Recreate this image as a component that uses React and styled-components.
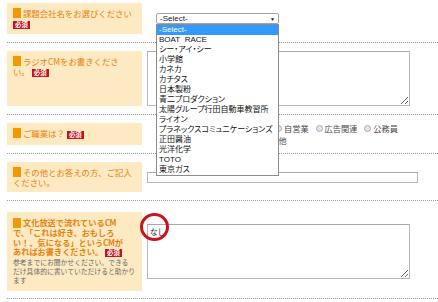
import React from "react";
import styled, { createGlobalStyle } from "styled-components";

const GlobalStyle = createGlobalStyle`
  body {
    margin: 0;
    background: #ffffff;
    font-family: "Liberation Sans", "Noto Sans CJK JP", sans-serif;
  }
`;

const Form = styled.div`
  width: 438px;
  padding-left: 7px;
  box-sizing: border-box;
  overflow: hidden;
`;

const Row = styled.div`
  display: flex;
  align-items: center;
  gap: 5px;
  padding-top: ${(p) => p.$pt || 8}px;
  padding-bottom: ${(p) => p.$pb || 8}px;
  border-bottom: 1px dotted #9a9a9a;
`;

const Label = styled.div`
  flex-shrink: 0;
  width: 135px;
  min-height: ${(p) => p.$h}px;
  box-sizing: border-box;
  padding: ${(p) => (p.$bold ? "6px 6px" : "5px 6px")};
  background: #fdeac2;
  color: #e8820f;
  font-family: "Noto Sans CJK JP", sans-serif;
  font-size: ${(p) => (p.$bold ? 8.2 : 8.4)}px;
  line-height: ${(p) => (p.$bold ? 9.5 : 10)}px;
  font-weight: ${(p) => (p.$bold ? 700 : 400)};
`;

const Mark = styled.span`
  display: inline-block;
  width: 8px;
  height: 10px;
  margin-right: 2px;
  vertical-align: top;
  background: #f39800;
`;

const Latin = styled.span`
  letter-spacing: -0.4px;
`;

const Badge = styled.span`
  display: inline-block;
  margin-left: ${(p) => (p.$inline ? 2 : 0)}px;
  margin-top: ${(p) => (p.$inline ? 0 : 1)}px;
  padding: 0 2px;
  background: #c8121b;
  color: #ffffff;
  font-size: 6.4px;
  line-height: 8px;
  font-weight: 700;
  vertical-align: middle;
`;

const Note = styled.div`
  margin-top: 1px;
  color: #6b6b6b;
  font-size: 6.8px;
  line-height: 9px;
  font-weight: 400;
`;

const SelectWrap = styled.div`
  position: relative;
  margin-left: 9px;
  width: 123px;
`;

const SelectBox = styled.div`
  height: 11px;
  box-sizing: border-box;
  display: flex;
  align-items: center;
  justify-content: space-between;
  padding: 0 3px;
  border: 1px solid #a4a4a4;
  border-radius: 2px;
  font-size: 8px;
  color: #222;
`;

const Arrow = styled.span`
  font-size: 5px;
  color: #111;
`;

const DropList = styled.div`
  position: absolute;
  top: 11px;
  left: 0;
  width: 123px;
  box-sizing: border-box;
  border: 1px solid #8c8c8c;
  background: #ffffff;
  z-index: 10;
`;

const DropItem = styled.div`
  height: 10px;
  line-height: 10px;
  padding: 0 2px;
  font-family: "Liberation Sans", "Noto Sans CJK JP", sans-serif;
  font-feature-settings: "palt";
  font-size: 8px;
  white-space: nowrap;
  overflow: hidden;
  color: ${(p) => (p.$active ? "#ffffff" : "#111111")};
  background: ${(p) => (p.$active ? "#3399ff" : "transparent")};
`;

const TextArea = styled.textarea`
  display: block;
  width: 263px;
  height: 55px;
  box-sizing: border-box;
  margin: 0;
  padding: 2px;
  border: 1px solid #b9b9b9;
  border-top-color: #a9a9a9;
  font-family: "Noto Sans CJK JP", sans-serif;
  font-size: 7.5px;
  line-height: 9px;
  color: #222;
  outline: none;
`;

const TextInput = styled.input`
  display: block;
  width: 271px;
  height: 11px;
  box-sizing: border-box;
  margin: 0;
  padding: 0 2px;
  border: 1px solid #b9b9b9;
  border-top-color: #a9a9a9;
  font-size: 8px;
  outline: none;
`;

const Radios = styled.div`
  display: flex;
  flex-direction: column;
  gap: 2px;
`;

const RadioLine = styled.div`
  display: flex;
  align-items: center;
  height: 10px;
  padding-left: ${(p) => p.$indent}px;
  white-space: nowrap;
`;

const RadioItem = styled.span`
  display: inline-flex;
  align-items: center;
  margin-right: 7px;
  font-family: "Noto Sans CJK JP", sans-serif;
  font-size: 8.2px;
  color: #4a4a4a;
`;

const Dot = styled.span`
  display: inline-block;
  width: 5px;
  height: 5px;
  margin-right: 2px;
  border: 1px solid #a8a8a8;
  border-radius: 50%;
  background: #e6e6e6;
`;

const AnnotWrap = styled.div`
  position: relative;
`;

const RedCircle = styled.div`
  position: absolute;
  left: -7px;
  top: -11px;
  width: 29px;
  height: 28px;
  box-sizing: border-box;
  border: 3px solid #c8141e;
  border-radius: 50%;
  pointer-events: none;
`;

const companies = [
  "-Select-",
  "BOAT\u00a0 RACE",
  "シー・アイ・シー",
  "小学館",
  "カネカ",
  "カチタス",
  "日本製粉",
  "青二プロダクション",
  "太陽グループ行田自動車教習所",
  "ライオン",
  "プラネックスコミュニケーションズ",
  "正田醤油",
  "光洋化学",
  "TOTO",
  "東京ガス",
];

// the options left of these sit under the open dropdown
const jobs1 = ["自営業", "広告関連", "公務員"];
const jobs2 = ["その他"];

const App = () => {
  return (
    <Form>
      <GlobalStyle />

      <Row $pt={3}>
        <Label $h={30}>
          <Mark />
          課題会社名をお選びください
          <br />
          <Badge>必須</Badge>
        </Label>
        <SelectWrap>
          <SelectBox>
            <span>-Select-</span>
            <Arrow>▼</Arrow>
          </SelectBox>
          <DropList>
            {companies.map((c, i) => (
              <DropItem key={c} $active={i === 0}>
                {c}
              </DropItem>
            ))}
          </DropList>
        </SelectWrap>
      </Row>

      <Row>
        <Label $h={55}>
          <Mark />
          ラジオCMをお書きくださ
          <br />
          い。
          <Badge $inline>必須</Badge>
        </Label>
        <TextArea defaultValue="" />
      </Row>

      <Row>
        <Label $h={22}>
          <Mark />
          ご職業は？
          <Badge $inline>必須</Badge>
        </Label>
        <Radios>
          <RadioLine $indent={128}>
            {jobs1.map((j) => (
              <RadioItem key={j}>
                <Dot />
                {j}
              </RadioItem>
            ))}
          </RadioLine>
          <RadioLine $indent={106}>
            {jobs2.map((j) => (
              <RadioItem key={j}>
                <Dot />
                {j}
              </RadioItem>
            ))}
          </RadioLine>
        </Radios>
      </Row>

      <Row>
        <Label $h={28}>
          <Mark />
          その他とお答えの方、ご記入
          <br />
          ください。
        </Label>
        <TextInput type="text" />
      </Row>

      <Row $pt={11} $pb={7}>
        <Label $h={78} $bold>
          <Mark />
          文化放送で流れている<Latin>CM</Latin>
          <br />
          で、「これは好き、おもしろ
          <br />
          い！、気になる」という<Latin>CM</Latin>が
          <br />
          あればお書きください。
          <Badge $inline>必須</Badge>
          <Note>
            参考までにお聞かせください。できる
            <br />
            だけ具体的に書いていただけると助かり
            <br />
            ます
          </Note>
        </Label>
        <AnnotWrap>
          <TextArea defaultValue="なし" />
          <RedCircle />
        </AnnotWrap>
      </Row>
    </Form>
  );
};

export default App;
